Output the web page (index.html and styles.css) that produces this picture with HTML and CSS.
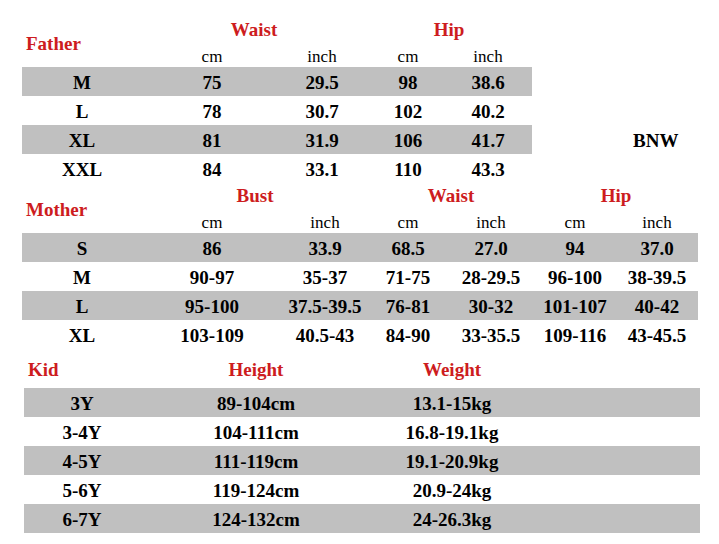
FILE: index.html
```html
<!DOCTYPE html>
<html lang="en">
<head>
<meta charset="utf-8">
<title>Size chart</title>
<link rel="stylesheet" href="styles.css">
</head>
<body>
<main class="chart">

  <section class="block father">
    <div class="table">
      <div class="head head-father">
        <div class="title">Father</div>
        <div class="group g-f-waist">Waist</div>
        <div class="group g-f-hip">Hip</div>
        <div class="unit u2">cm</div>
        <div class="unit u3">inch</div>
        <div class="unit u4">cm</div>
        <div class="unit u5">inch</div>
      </div>
      <div class="row row-father shade"><span>M</span><span>75</span><span>29.5</span><span>98</span><span>38.6</span></div>
      <div class="row row-father"><span>L</span><span>78</span><span>30.7</span><span>102</span><span>40.2</span></div>
      <div class="row row-father shade"><span>XL</span><span>81</span><span>31.9</span><span>106</span><span>41.7</span></div>
      <div class="row row-father"><span>XXL</span><span>84</span><span>33.1</span><span>110</span><span>43.3</span></div>
    </div>
    <aside class="brand"><span class="brand-cell">BNW</span></aside>
  </section>

  <section class="block mother">
    <div class="head head-mother">
      <div class="title">Mother</div>
      <div class="group g-m-bust">Bust</div>
      <div class="group g-m-waist">Waist</div>
      <div class="group g-m-hip">Hip</div>
      <div class="unit u2">cm</div>
      <div class="unit u3">inch</div>
      <div class="unit u4">cm</div>
      <div class="unit u5">inch</div>
      <div class="unit u6">cm</div>
      <div class="unit u7">inch</div>
    </div>
    <div class="row row-mother shade"><span>S</span><span>86</span><span>33.9</span><span>68.5</span><span>27.0</span><span>94</span><span>37.0</span></div>
    <div class="row row-mother"><span>M</span><span>90-97</span><span>35-37</span><span>71-75</span><span>28-29.5</span><span>96-100</span><span>38-39.5</span></div>
    <div class="row row-mother shade"><span>L</span><span>95-100</span><span>37.5-39.5</span><span>76-81</span><span>30-32</span><span>101-107</span><span>40-42</span></div>
    <div class="row row-mother"><span>XL</span><span>103-109</span><span>40.5-43</span><span>84-90</span><span>33-35.5</span><span>109-116</span><span>43-45.5</span></div>
  </section>

  <section class="block kid">
    <div class="head head-kid">
      <div class="title">Kid</div>
      <div class="group">Height</div>
      <div class="group">Weight</div>
    </div>
    <div class="row row-kid shade"><span>3Y</span><span>89-104cm</span><span>13.1-15kg</span></div>
    <div class="row row-kid"><span>3-4Y</span><span>104-111cm</span><span>16.8-19.1kg</span></div>
    <div class="row row-kid shade"><span>4-5Y</span><span>111-119cm</span><span>19.1-20.9kg</span></div>
    <div class="row row-kid"><span>5-6Y</span><span>119-124cm</span><span>20.9-24kg</span></div>
    <div class="row row-kid shade"><span>6-7Y</span><span>124-132cm</span><span>24-26.3kg</span></div>
  </section>

</main>
</body>
</html>
```

FILE: styles.css
```css
html, body {
  margin: 0;
  padding: 0;
  background: #ffffff;
}

body {
  color: #000000;
}

.chart {
  width: 719px;
  padding-top: 20px;
  font-family: "Liberation Serif", serif;
}

/* ---------- headers ---------- */
.head {
  display: grid;
}

.title {
  font-family: "Liberation Serif", serif;
  font-size: 19px;
  line-height: 20px;
  font-weight: bold;
  color: #cd1c20;
  padding-left: 4px;
}

.group {
  font-family: "Liberation Serif", serif;
  font-size: 19px;
  line-height: 20px;
  font-weight: bold;
  color: #cd1c20;
  text-align: center;
}

.unit {
  font-family: "Liberation Serif", serif;
  grid-row: 2;
  font-size: 17px;
  line-height: 20px;
  text-align: center;
}

.u2 { grid-column: 2; }
.u3 { grid-column: 3; }
.u4 { grid-column: 4; }
.u5 { grid-column: 5; }
.u6 { grid-column: 6; }
.u7 { grid-column: 7; }

/* ---------- rows ---------- */
.row {
  font-family: "Liberation Serif", serif;
  display: grid;
  height: 29px;
  box-sizing: border-box;
  padding-top: 2px;
  font-size: 19px;
  line-height: 27px;
  font-weight: bold;
}

.row span {
  text-align: center;
  white-space: nowrap;
}

.shade {
  background: #c0c0c0;
}

/* ---------- father ---------- */
.father {
  display: flex;
  margin-left: 22px;
}

.father .table {
  width: 510px;
}

.head-father,
.row-father {
  grid-template-columns: 120px 140px 80px 92px 68px;
}

.head-father {
  grid-template-rows: 27px 20px;
}

.head-father .title {
  grid-row: 1 / 3;
  grid-column: 1;
  align-self: center;
}

.g-f-waist {
  grid-row: 1;
  grid-column: 2 / 4;
  padding-left: 4px;
}

.g-f-hip {
  grid-row: 1;
  grid-column: 4 / 6;
  padding-left: 14px;
}

.brand {
  padding-top: 105px;
  padding-left: 101px;
}

.brand-cell {
  display: block;
  font-family: "Liberation Serif", serif;
  font-size: 19px;
  line-height: 27px;
  font-weight: bold;
  padding-top: 2px;
}

/* ---------- mother ---------- */
.mother {
  margin-top: 3px;
  margin-left: 22px;
  width: 676px;
}

.head-mother,
.row-mother {
  grid-template-columns: 120px 140px 86px 80px 86px 82px 82px;
}

.head-mother {
  grid-template-rows: 27px 20px;
}

.head-mother .title {
  grid-row: 1 / 3;
  grid-column: 1;
  align-self: center;
}

.g-m-bust {
  grid-row: 1;
  grid-column: 2 / 4;
}

.g-m-waist {
  grid-row: 1;
  grid-column: 4 / 6;
}

.g-m-hip {
  grid-row: 1;
  grid-column: 6 / 8;
}

/* ---------- kid ---------- */
.kid {
  margin-top: 11px;
  margin-left: 24px;
  width: 676px;
}

.head-kid,
.row-kid {
  grid-template-columns: 116px 232px 160px;
}

.head-kid {
  height: 28px;
  align-items: start;
}
```
